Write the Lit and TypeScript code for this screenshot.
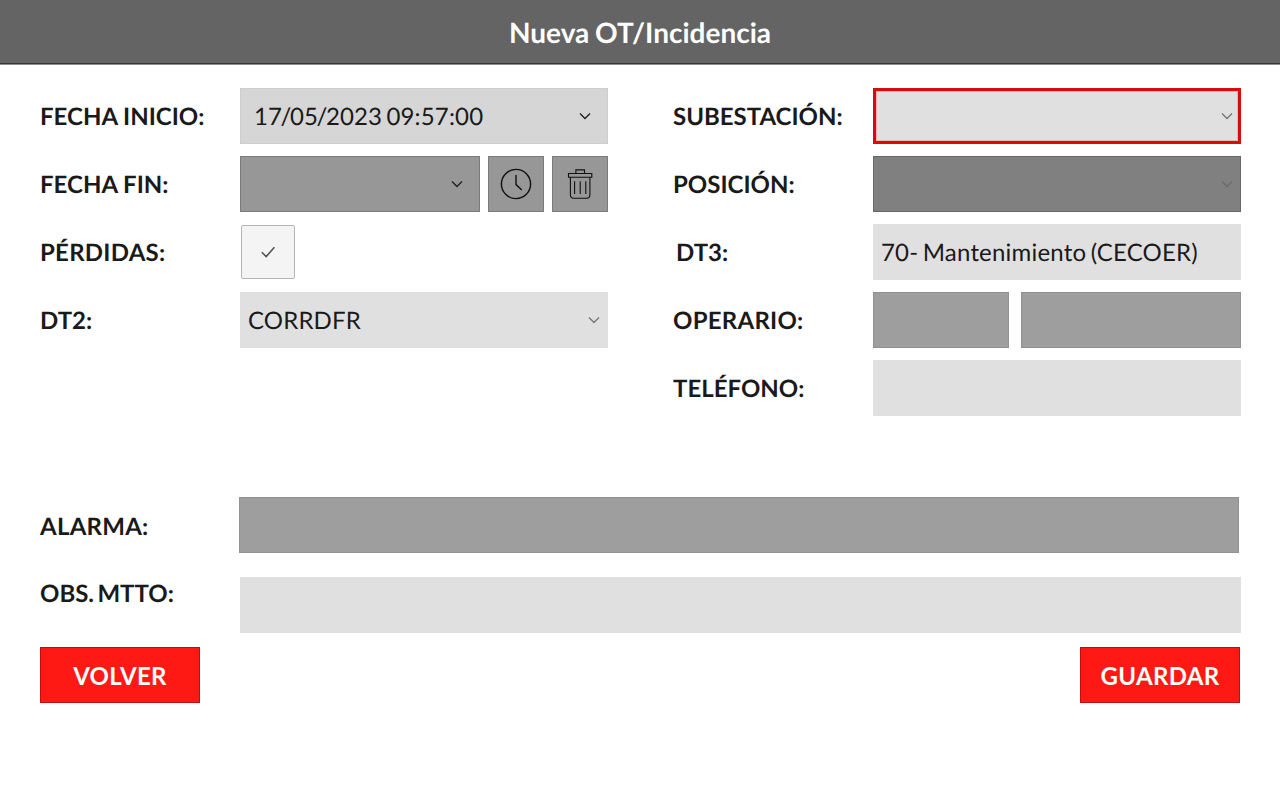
import { LitElement, html, css } from "lit";
import { customElement, property, state } from "lit/decorators.js";

@customElement("select-box")
export class SelectBox extends LitElement {
  @property() value = "";

  static styles = css`
    :host {
      display: flex;
      align-items: center;
      justify-content: space-between;
      box-sizing: border-box;
      height: 56px;
      padding: 0 8px;
      background: #e0e0e0;
      color: #1a1a1a;
    }
    .text {
      padding-top: 2px;
      white-space: pre;
      letter-spacing: 0.15px;
      word-spacing: -2px;
    }
    .slash {
      margin: 0 -1.6px;
    }
    .arrow {
      flex: none;
      width: 12px;
      height: 12px;
      color: var(--arrow-color, #777);
    }
  `;

  render() {
    const parts = this.value.split("/");
    return html`
      <span class="text"
        >${parts.map((part, i) => (i ? html`<span class="slash">/</span>${part}` : part))}</span
      >
      <svg class="arrow" viewBox="0 0 12 12" fill="none" stroke="currentColor" stroke-width="1.4">
        <path d="M1 3.4 L6 8.4 L11 3.4" />
      </svg>
    `;
  }
}

@customElement("app-root")
export class AppRoot extends LitElement {
  @state() inicio = "17/05/2023 09:57:00";
  @state() dt2 = "CORRDFR";
  @state() dt3 = "70- Mantenimiento (CECOER)";

  static styles = css`
    :host {
      display: block;
      height: 800px;
      background: #fff;
      color: #1a1a1a;
      font-family: Lato, "Liberation Sans", sans-serif;
      font-size: 24px;
      line-height: 30px;
      text-rendering: geometricPrecision;
    }
    header {
      box-sizing: border-box;
      height: 64px;
      padding-top: 14px;
      background: #646464;
      border-bottom: 1px solid #383838;
      box-shadow: 0 1px 0 #8e8e8e;
    }
    h1 {
      margin: 0;
      color: #fff;
      font-size: 28px;
      font-weight: 700;
      line-height: 36px;
      text-align: center;
      word-spacing: -1px;
    }
    .columns {
      display: grid;
      grid-template-columns: 568px 568px;
      column-gap: 65px;
      padding: 24px 0 0 40px;
    }
    .column {
      display: flex;
      flex-direction: column;
      gap: 12px;
    }
    .row {
      display: grid;
      grid-template-columns: 200px 1fr;
      align-items: center;
      height: 56px;
    }
    .label {
      padding-top: 2px;
      font-weight: 700;
      white-space: nowrap;
    }
    .loose {
      letter-spacing: 0.25px;
    }
    .indent {
      padding-left: 3px;
    }
    .group {
      display: flex;
      gap: 8px;
    }
    .wide-gap {
      gap: 12px;
    }
    .grow {
      flex: 1;
    }
    .field {
      display: flex;
      align-items: center;
      box-sizing: border-box;
      height: 56px;
      padding: 2px 8px 0;
      background: #e0e0e0;
      letter-spacing: 0.2px;
      word-spacing: -2px;
    }
    .disabled {
      background: #9e9e9e;
      border: 1px solid #929292;
    }
    .code {
      width: 136px;
    }
    .date {
      --arrow-color: #222;
      padding: 0 16px 0 13px;
      background: #d6d6d6;
      border: 1px solid #cecece;
    }
    .date.off {
      background: #979797;
      border-color: #7c7c7c;
    }
    .required {
      border: 3px solid #d90b0b;
      box-shadow: inset 0 0 0 1px #f0b4b4;
      padding-right: 5px;
    }
    .locked {
      --arrow-color: #6c6c6c;
      background: #808080;
      border: 1px solid #686868;
      padding-right: 7px;
    }
    .square {
      display: flex;
      align-items: center;
      justify-content: center;
      box-sizing: border-box;
      width: 56px;
      height: 56px;
      padding: 0;
      background: #979797;
      border: 1px solid #7c7c7c;
      color: #111;
    }
    .check {
      width: 54px;
      height: 54px;
      margin-left: 1px;
      background: #f4f4f4;
      border: 1px solid #b4b4b4;
      border-radius: 2px;
      color: #555;
    }
    .notes {
      display: flex;
      flex-direction: column;
      gap: 24px;
      padding: 81px 39px 0 40px;
    }
    .alarm {
      grid-template-columns: 199px 1000px;
    }
    .alarm .label {
      padding-top: 3px;
    }
    .obs .label {
      padding: 0 0 23px;
      word-spacing: -2.5px;
    }
    footer {
      display: flex;
      justify-content: space-between;
      padding: 14px 40px 0;
    }
    .action {
      box-sizing: border-box;
      width: 160px;
      height: 56px;
      padding: 2px 0 0;
      background: #ff1914;
      border: 1px solid #c20f0b;
      color: #fff;
      font: inherit;
      font-weight: 700;
      letter-spacing: 0.3px;
    }
  `;

  render() {
    return html`
      <header><h1>Nueva OT/Incidencia</h1></header>

      <div class="columns">
        <div class="column">
          <div class="row">
            <span class="label">FECHA INICIO:</span>
            <select-box class="date" .value=${this.inicio}></select-box>
          </div>
          <div class="row">
            <span class="label">FECHA FIN:</span>
            <div class="group">
              <select-box class="date off grow"></select-box>
              <button class="square" aria-label="Hora actual">
                <svg width="32" height="32" viewBox="0 0 32 32" fill="none" stroke="currentColor" stroke-width="1.4">
                  <circle cx="16" cy="16" r="14.6" />
                  <path d="M16 7 V16.6 L21.8 22" />
                </svg>
              </button>
              <button class="square" aria-label="Borrar">
                <svg width="32" height="32" viewBox="0 0 32 32" fill="none" stroke="currentColor" stroke-width="1.1">
                  <path d="M4.5 5.5 H27.8 V9.2 H4.5 Z" />
                  <path d="M11.9 5.5 V1.9 H20.5 V5.5" />
                  <path d="M6.4 9.2 V26.8 Q6.4 30.2 9.8 30.2 H22.5 Q25.9 30.2 25.9 26.8 V9.2" />
                  <path d="M10.6 13.2 V26 M16.2 13.2 V26 M21.8 13.2 V26" />
                </svg>
              </button>
            </div>
          </div>
          <div class="row">
            <span class="label loose">PÉRDIDAS:</span>
            <button class="square check" aria-label="Pérdidas">
              <svg width="16" height="16" viewBox="0 0 16 16" fill="none" stroke="currentColor" stroke-width="1.6">
                <path d="M1.8 8.2 L6.2 12.6 L14.4 3.2" />
              </svg>
            </button>
          </div>
          <div class="row">
            <span class="label">DT2:</span>
            <select-box .value=${this.dt2}></select-box>
          </div>
        </div>

        <div class="column">
          <div class="row">
            <span class="label">SUBESTACIÓN:</span>
            <select-box class="required"></select-box>
          </div>
          <div class="row">
            <span class="label">POSICIÓN:</span>
            <select-box class="locked"></select-box>
          </div>
          <div class="row">
            <span class="label indent">DT3:</span>
            <div class="field">${this.dt3}</div>
          </div>
          <div class="row">
            <span class="label loose">OPERARIO:</span>
            <div class="group wide-gap">
              <div class="field disabled code"></div>
              <div class="field disabled grow"></div>
            </div>
          </div>
          <div class="row">
            <span class="label">TELÉFONO:</span>
            <div class="field"></div>
          </div>
        </div>
      </div>

      <div class="notes">
        <div class="row alarm">
          <span class="label loose">ALARMA:</span>
          <div class="field disabled"></div>
        </div>
        <div class="row obs">
          <span class="label">OBS. MTTO:</span>
          <div class="field"></div>
        </div>
      </div>

      <footer>
        <button class="action">VOLVER</button>
        <button class="action">GUARDAR</button>
      </footer>
    `;
  }
}
